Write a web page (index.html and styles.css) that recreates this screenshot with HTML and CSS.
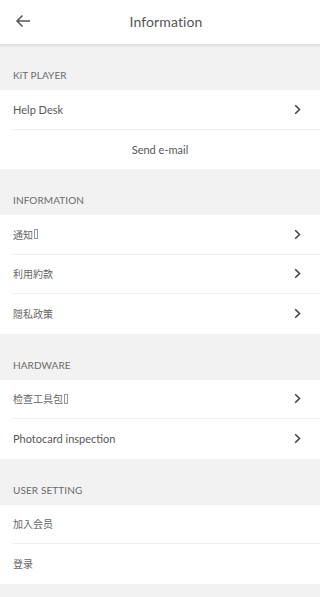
FILE: index.html
```html
<!DOCTYPE html>
<html>
<head>
<meta charset="utf-8">
<link rel="stylesheet" href="styles.css">
</head>
<body>
<header class="topbar">
  <svg class="back" width="16" height="14" viewBox="0 0 16 14"><path d="M15 7H2M7.5 1.5 2 7l5.5 5.5" fill="none" stroke="#555" stroke-width="1.5"/></svg>
  <div class="title">Information</div>
</header>
<main>
  <div class="sec-label">KiT PLAYER</div>
  <div class="group">
    <div class="row"><span>Help Desk</span><svg class="chev" viewBox="0 0 7 11"><path d="M1.2 1.2 5.5 5.5 1.2 9.8" fill="none" stroke="#444" stroke-width="1.6"/></svg></div>
    <div class="row center"><span>Send e-mail</span></div>
  </div>
  <div class="sec-label">INFORMATION</div>
  <div class="group">
    <div class="row"><span class="cjk">通知<i class="tofu"></i></span><svg class="chev" viewBox="0 0 7 11"><path d="M1.2 1.2 5.5 5.5 1.2 9.8" fill="none" stroke="#444" stroke-width="1.6"/></svg></div>
    <div class="row"><span class="cjk">利用約款</span><svg class="chev" viewBox="0 0 7 11"><path d="M1.2 1.2 5.5 5.5 1.2 9.8" fill="none" stroke="#444" stroke-width="1.6"/></svg></div>
    <div class="row"><span class="cjk">隠私政策</span><svg class="chev" viewBox="0 0 7 11"><path d="M1.2 1.2 5.5 5.5 1.2 9.8" fill="none" stroke="#444" stroke-width="1.6"/></svg></div>
  </div>
  <div class="sec-label">HARDWARE</div>
  <div class="group">
    <div class="row"><span class="cjk">检查工具包<i class="tofu"></i></span><svg class="chev" viewBox="0 0 7 11"><path d="M1.2 1.2 5.5 5.5 1.2 9.8" fill="none" stroke="#444" stroke-width="1.6"/></svg></div>
    <div class="row"><span>Photocard inspection</span><svg class="chev" viewBox="0 0 7 11"><path d="M1.2 1.2 5.5 5.5 1.2 9.8" fill="none" stroke="#444" stroke-width="1.6"/></svg></div>
  </div>
  <div class="sec-label">USER SETTING</div>
  <div class="group">
    <div class="row"><span class="cjk">加入会员</span></div>
    <div class="row"><span class="cjk">登录</span></div>
  </div>
</main>
</body>
</html>
```

FILE: styles.css
```css
* { box-sizing: border-box; }
html, body { margin: 0; padding: 0; }
body {
  width: 320px;
  height: 597px;
  overflow: hidden;
  background: #f2f2f2;
  font-family: Lato, "Noto Sans CJK JP", sans-serif;
  color: #555;
}
.topbar {
  height: 44px;
  background: #fff;
  display: flex;
  align-items: center;
  justify-content: center;
  position: relative;
  box-shadow: 0 1px 3px rgba(0,0,0,0.12);
  z-index: 1;
}
.back { position: absolute; left: 15px; top: 14px; }
.title {
  font-size: 14px;
  color: #555;
  letter-spacing: 0.1px;
  margin: -2px 0 0 12px;
}
.sec-label {
  height: 46px;
  display: flex;
  align-items: flex-end;
  padding: 0 0 9px 13px;
  font-size: 10px;
  color: #6a6a6a;
  letter-spacing: 0.1px;
}
.group {
  background: #fff;
  padding-left: 12px;
}
.row {
  height: 39.5px;
  display: flex;
  align-items: center;
  justify-content: space-between;
  padding: 0 19px 0 1px;
  border-bottom: 1px solid #f0f0f0;
  font-size: 11px;
  color: #585858;
}
.row:last-child { border-bottom: none; }
.row.center { justify-content: center; padding-right: 13px; }
.cjk { font-family: "Noto Sans CJK JP", sans-serif; font-size: 10px; color: #666; display: inline-flex; align-items: center; }
.tofu {
  display: inline-block;
  width: 4px;
  height: 10px;
  border: 1px solid #999;
  margin-left: 1px;
}
.chev { width: 7px; height: 11px; }
```
